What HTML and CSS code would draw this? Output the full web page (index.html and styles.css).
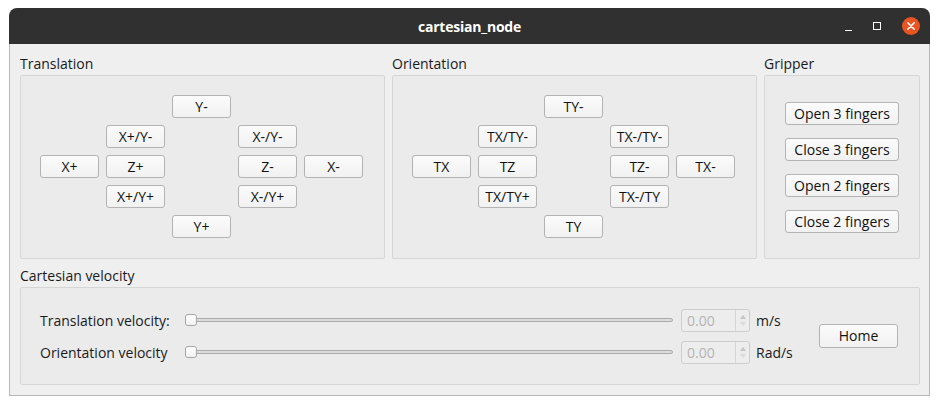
FILE: index.html
```html
<!DOCTYPE html>
<html>
<head>
<meta charset="utf-8">
<link rel="stylesheet" href="styles.css">
</head>
<body>
<div class="window">
  <div class="titlebar">
    <div class="title">cartesian_node</div>
    <div class="controls">
      <span class="ctl-min"></span>
      <span class="ctl-max"></span>
      <span class="ctl-close">
        <svg width="18" height="18" viewBox="0 0 18 18"><circle cx="9" cy="9" r="9" fill="#e95420"/><path d="M5.8 5.8 L12.2 12.2 M12.2 5.8 L5.8 12.2" stroke="#fff" stroke-width="1.6" stroke-linecap="round"/></svg>
      </span>
    </div>
  </div>
  <div class="content">
    <div class="top-row">
      <section class="group">
        <div class="group-label">Translation</div>
        <div class="frame pad-grid">
          <div class="dir-grid">
            <button class="btn r1 c3">Y-</button>
            <button class="btn r2 c2">X+/Y-</button>
            <button class="btn r2 c4">X-/Y-</button>
            <button class="btn r3 c1">X+</button>
            <button class="btn r3 c2">Z+</button>
            <button class="btn r3 c4">Z-</button>
            <button class="btn r3 c5">X-</button>
            <button class="btn r4 c2">X+/Y+</button>
            <button class="btn r4 c4">X-/Y+</button>
            <button class="btn r5 c3">Y+</button>
          </div>
        </div>
      </section>
      <section class="group">
        <div class="group-label">Orientation</div>
        <div class="frame pad-grid">
          <div class="dir-grid">
            <button class="btn r1 c3">TY-</button>
            <button class="btn r2 c2">TX/TY-</button>
            <button class="btn r2 c4">TX-/TY-</button>
            <button class="btn r3 c1">TX</button>
            <button class="btn r3 c2">TZ</button>
            <button class="btn r3 c4">TZ-</button>
            <button class="btn r3 c5">TX-</button>
            <button class="btn r4 c2">TX/TY+</button>
            <button class="btn r4 c4">TX-/TY</button>
            <button class="btn r5 c3">TY</button>
          </div>
        </div>
      </section>
      <section class="group">
        <div class="group-label">Gripper</div>
        <div class="frame gripper">
          <button class="btn wide">Open 3 fingers</button>
          <button class="btn wide">Close 3 fingers</button>
          <button class="btn wide">Open 2 fingers</button>
          <button class="btn wide">Close 2 fingers</button>
        </div>
      </section>
    </div>
    <section class="group vel-group">
      <div class="group-label">Cartesian velocity</div>
      <div class="frame velocity">
        <div class="vel-grid">
          <div class="vel-label">Translation velocity:</div>
          <div class="slider"><div class="groove"></div><div class="handle"></div></div>
          <div class="spin"><span class="spin-val">0.00</span><span class="spin-arrows"><span class="up"></span><span class="down"></span></span></div>
          <div class="unit">m/s</div>
          <div class="vel-label">Orientation velocity</div>
          <div class="slider"><div class="groove"></div><div class="handle"></div></div>
          <div class="spin"><span class="spin-val">0.00</span><span class="spin-arrows"><span class="up"></span><span class="down"></span></span></div>
          <div class="unit">Rad/s</div>
        </div>
        <button class="btn home">Home</button>
      </div>
    </section>
  </div>
</div>
</body>
</html>
```
FILE: styles.css
```css
html, body {
  margin: 0;
  padding: 0;
  background: #ffffff;
}
body {
  font-family: "Open Sans", "DejaVu Sans", sans-serif;
  font-size: 14px;
  color: #161616;
}
.window {
  margin: 8px 0 0 9px;
  width: 921px;
}
.titlebar {
  height: 36px;
  background: #303030;
  border-radius: 8px 8px 0 0;
  display: flex;
  align-items: center;
  justify-content: center;
  position: relative;
}
.title {
  color: #ffffff;
  font-weight: bold;
  font-size: 14px;
  letter-spacing: -0.2px;
}
.controls {
  position: absolute;
  right: 10px;
  top: 0;
  height: 36px;
  display: flex;
  align-items: center;
}
.ctl-min {
  width: 7px;
  height: 1px;
  background: #ffffff;
  margin-top: 8px;
  margin-right: 21px;
}
.ctl-max {
  width: 6px;
  height: 6px;
  border: 1px solid #ffffff;
  margin-right: 21px;
}
.ctl-close {
  width: 18px;
  height: 18px;
  display: block;
}
.ctl-close svg { display: block; }
.content {
  background: #efefef;
  border: 1px solid #b8b8b8;
  border-top: none;
  padding: 11px 9px 10px 10px;
}
.top-row {
  display: grid;
  grid-template-columns: 365px 365px 156px;
  column-gap: 7px;
}
.group-label {
  height: 20px;
  line-height: 17px;
  font-size: 14px;
  color: #1a1a1a;
}
.frame {
  border: 1px solid #d6d6d6;
  border-radius: 2px;
  background: #ebebeb;
  box-sizing: border-box;
}
.pad-grid {
  height: 184px;
  padding: 19px 0 0 19px;
}
.dir-grid {
  display: grid;
  grid-template-columns: repeat(5, 59px);
  grid-template-rows: repeat(5, 23px);
  gap: 7px;
}
.r1 { grid-row: 1; } .r2 { grid-row: 2; } .r3 { grid-row: 3; } .r4 { grid-row: 4; } .r5 { grid-row: 5; }
.c1 { grid-column: 1; } .c2 { grid-column: 2; } .c3 { grid-column: 3; } .c4 { grid-column: 4; } .c5 { grid-column: 5; }
.btn {
  font-family: "Open Sans", "DejaVu Sans", sans-serif;
  font-size: 14px;
  color: #111;
  background: linear-gradient(#fbfbfb, #f1f1f1);
  border: 1px solid #b3b3b3;
  border-radius: 3px;
  padding: 0;
  margin: 0;
  height: 23px;
  line-height: 20px;
  box-sizing: border-box;
  white-space: nowrap;
}
.gripper {
  height: 184px;
  display: flex;
  flex-direction: column;
  align-items: center;
  gap: 13px;
  padding-top: 26px;
}
.btn.wide {
  width: 114px;
}
.vel-group {
  margin-top: 8px;
}
.velocity {
  height: 98px;
  display: flex;
  align-items: center;
  padding: 0 21px 0 19px;
}
.vel-grid {
  display: grid;
  grid-template-columns: 145px 488px 77px auto;
  grid-template-rows: 23px 23px;
  row-gap: 9px;
  align-items: center;
}
.vel-label {
  color: #1a1a1a;
  white-space: nowrap;
}
.slider {
  position: relative;
  height: 12px;
}
.groove {
  position: absolute;
  left: 2px;
  right: 0;
  top: 4px;
  height: 4px;
  border: 1px solid #a9a9a9;
  border-radius: 3px;
  background: #dcdcdc;
  box-sizing: border-box;
}
.handle {
  position: absolute;
  left: 0;
  top: 0;
  width: 12px;
  height: 12px;
  box-sizing: border-box;
  border: 1px solid #a6a6a6;
  border-radius: 3px;
  background: linear-gradient(#ffffff, #f2f2f2);
}
.spin {
  margin-left: 8px;
  width: 69px;
  height: 23px;
  box-sizing: border-box;
  border: 1px solid #cdcdcd;
  border-radius: 3px;
  background: #ededed;
  display: flex;
  align-items: stretch;
}
.spin-val {
  flex: 1;
  color: #b4b4b4;
  padding-left: 5px;
  line-height: 21px;
}
.spin-arrows {
  width: 13px;
  border-left: 1px solid #d6d6d6;
  display: flex;
  flex-direction: column;
  align-items: center;
  justify-content: center;
  gap: 3px;
}
.up {
  width: 0; height: 0;
  border-left: 3px solid transparent;
  border-right: 3px solid transparent;
  border-bottom: 4px solid #c4c4c4;
}
.down {
  width: 0; height: 0;
  border-left: 3px solid transparent;
  border-right: 3px solid transparent;
  border-top: 4px solid #dadada;
}
.unit {
  margin-left: 6px;
  color: #1a1a1a;
}
.btn.home {
  margin-left: auto;
  width: 79px;
  height: 24px;
}
```
